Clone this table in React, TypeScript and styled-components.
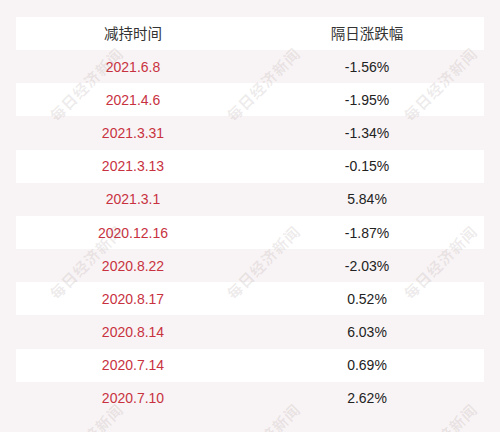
import styled, { createGlobalStyle } from 'styled-components';

const GlobalStyle = createGlobalStyle`
  html, body { margin: 0; padding: 0; background: #f8f4f5; }
  body { font-family: "Liberation Sans", "Noto Sans CJK SC", sans-serif; }
`;

const Page = styled.div`
  position: relative;
  width: 500px;
  height: 432px;
  overflow: hidden;
  background: #f8f4f5;
  padding: 17px 16px 0;
  box-sizing: border-box;
`;

const Table = styled.div`
  display: flex;
  flex-direction: column;
`;

const Row = styled.div<{ $striped?: boolean }>`
  display: grid;
  grid-template-columns: 1fr 1fr;
  height: 33.17px;
  align-items: center;
  background: ${({ $striped }) => ($striped ? 'transparent' : '#ffffff')};
`;

const HeadCell = styled.div`
  text-align: center;
  font-family: "Noto Sans CJK SC", "Liberation Sans", sans-serif;
  font-size: 14.5px;
  color: #333333;
  line-height: 1;
`;

const Cell = styled.div<{ $red?: boolean }>`
  text-align: center;
  font-size: 14px;
  line-height: 1;
  color: ${({ $red }) => ($red ? '#c8323f' : '#222222')};
`;

const Watermark = styled.div`
  position: absolute;
  transform: translate(-50%, -50%) rotate(-45deg);
  font-family: "Noto Sans CJK SC", sans-serif;
  font-weight: 700;
  font-size: 15px;
  letter-spacing: 1px;
  color: rgba(120, 100, 105, 0.13);
  white-space: nowrap;
  pointer-events: none;
`;

const rows: [string, string][] = [
  ['2021.6.8', '-1.56%'],
  ['2021.4.6', '-1.95%'],
  ['2021.3.31', '-1.34%'],
  ['2021.3.13', '-0.15%'],
  ['2021.3.1', '5.84%'],
  ['2020.12.16', '-1.87%'],
  ['2020.8.22', '-2.03%'],
  ['2020.8.17', '0.52%'],
  ['2020.8.14', '6.03%'],
  ['2020.7.14', '0.69%'],
  ['2020.7.10', '2.62%'],
];

const marks: [number, number][] = [];
for (const y of [84, 262, 440]) {
  for (const x of [86, 263, 440]) marks.push([x, y]);
}

export default function App() {
  return (
    <Page>
      <GlobalStyle />
      <Table>
        <Row>
          <HeadCell>减持时间</HeadCell>
          <HeadCell>隔日涨跌幅</HeadCell>
        </Row>
        {rows.map(([date, pct], i) => (
          <Row key={date} $striped={i % 2 === 0}>
            <Cell $red>{date}</Cell>
            <Cell>{pct}</Cell>
          </Row>
        ))}
      </Table>
      {marks.map(([x, y]) => (
        <Watermark key={`${x}-${y}`} style={{ left: x, top: y }}>每日经济新闻</Watermark>
      ))}
    </Page>
  );
}
